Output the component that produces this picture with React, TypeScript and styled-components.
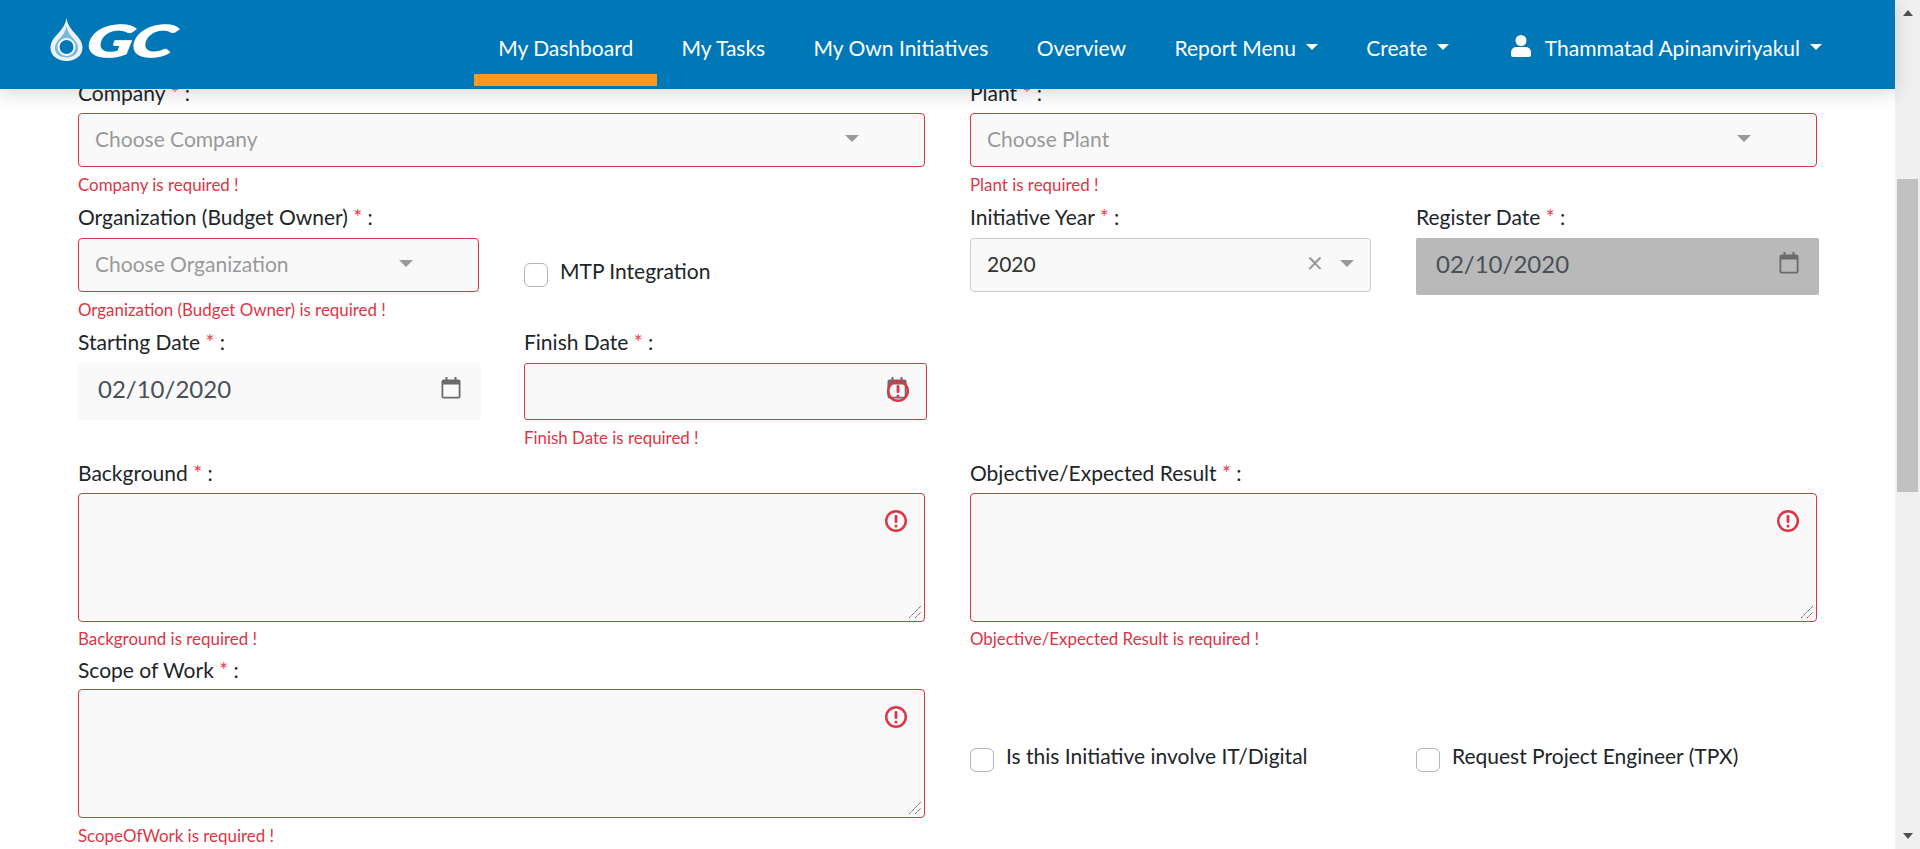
import React from "react";
import styled, { createGlobalStyle } from "styled-components";

const Global = createGlobalStyle`
  html, body { margin: 0; padding: 0; height: 100%; overflow: hidden; background: #fff; }
  body { font-family: Lato, "Open Sans", sans-serif; color: #212529; }
  * { box-sizing: border-box; }
`;

const Shell = styled.div`
  display: flex;
  width: 1920px;
  height: 849px;
  overflow: hidden;
`;
const Main = styled.div`
  flex: 1;
  min-width: 0;
  display: flex;
  flex-direction: column;
`;
const Header = styled.header`
  position: relative;
  z-index: 2;
  flex: none;
  height: 89px;
  background: #0077b7;
  box-shadow: 0 4px 18px rgba(0, 0, 0, 0.16);
  display: flex;
  align-items: stretch;
  color: #fff;
`;
const Logo = styled.div`
  width: 474px;
  flex: none;
  padding: 18px 0 0 50px;
  display: flex;
  align-items: flex-start;
  gap: 5px;
`;
const LogoText = styled.span`
  display: block;
  margin-top: 0;
  font: italic 900 44px/44px Lato, sans-serif;
  letter-spacing: -1px;
  color: #fff;
  -webkit-text-stroke: 1px #fff;
  transform: scaleX(1.55) skewX(-8deg);
  transform-origin: left center;
`;
const Nav = styled.nav`
  display: flex;
  align-items: stretch;
`;
const NavItem = styled.a<{ $active?: boolean; $left?: number }>`
  display: flex;
  align-items: center;
  height: 86px;
  padding: 21px 24.2px 0;
  margin-left: ${(p) => p.$left ?? 0}px;
  font-size: 21px;
  color: #fff;
  white-space: nowrap;
  border-bottom: 12px solid ${(p) => (p.$active ? "#ff981f" : "transparent")};
`;
const NavCaret = styled.i`
  display: block;
  margin-left: 10px;
  margin-top: -2px;
  width: 0;
  height: 0;
  border-left: 6.5px solid transparent;
  border-right: 6.5px solid transparent;
  border-top: 6.5px solid #fff;
`;
const UserIcon = styled.svg`
  width: 20px;
  height: 22px;
  margin-right: 14px;
  margin-top: -3px;
  fill: #fff;
`;

const Scroller = styled.div`
  position: relative;
  z-index: 1;
  flex: 1;
  overflow: hidden;
`;
const Form = styled.form`
  margin-top: -8px;
  padding-left: 78px;
  width: 1817px;
`;
const Row = styled.div<{ $top?: number }>`
  display: grid;
  grid-template-columns: repeat(4, minmax(0, 1fr));
  column-gap: 45px;
  margin-top: ${(p) => p.$top ?? 0}px;
`;
const Cell = styled.div<{ $span?: number; $pad?: number }>`
  grid-column: span ${(p) => p.$span ?? 1};
  padding-top: ${(p) => p.$pad ?? 0}px;
  min-width: 0;
`;
const Label = styled.label<{ $gap?: number }>`
  display: block;
  font-size: 21px;
  line-height: 24px;
  margin-bottom: ${(p) => p.$gap ?? 9}px;
  color: #212529;
`;
const Star = styled.span`
  color: #e8404f;
`;
const SelectBox = styled.div<{ $invalid?: boolean }>`
  height: 54px;
  display: flex;
  align-items: center;
  padding: 0 16px 4px;
  background: #f9f9f9;
  border: 1px solid ${(p) => (p.$invalid ? "#dc3545" : "#ccc")};
  border-radius: 4px;
  font-size: 21px;
`;
const Placeholder = styled.span<{ $filled?: boolean }>`
  flex: 1;
  color: ${(p) => (p.$filled ? "#333" : "#999")};
`;
const Caret = styled.i<{ $right?: number }>`
  display: block;
  flex: none;
  margin-right: ${(p) => p.$right ?? 49}px;
  margin-top: 0;
  width: 0;
  height: 0;
  border-left: 7.5px solid transparent;
  border-right: 7.5px solid transparent;
  border-top: 7.5px solid #999;
`;
const Clear = styled.span`
  flex: none;
  font-size: 28px;
  line-height: 1;
  color: #999;
  margin-top: -3px;
  margin-right: 17px;
`;
const DateBox = styled.div<{ $invalid?: boolean; $disabled?: boolean }>`
  position: relative;
  width: calc(100% + 2px);
  height: 57px;
  margin-top: ${(p) => (p.$disabled ? 1 : 0)}px;
  display: flex;
  align-items: center;
  justify-content: space-between;
  padding: 0 19px 6px;
  background: ${(p) => (p.$disabled ? "#b9b9b9" : "#f9f9f9")};
  border: 1px solid ${(p) => (p.$invalid ? "#dc3545" : "transparent")};
  border-radius: ${(p) => (p.$disabled ? 2 : 3)}px;
  font-size: 24px;
  color: #495057;
`;
const Cal = styled.svg`
  width: 20px;
  height: 22px;
  margin-top: -2px;
  margin-left: auto;
  flex: none;
  fill: #6b6b6b;
`;
const AlertSvg = styled.svg`
  position: absolute;
  width: 24px;
  height: 24px;
  right: 16px;
  top: 15px;
`;
const ErrorText = styled.div<{ $gap?: number }>`
  font-size: 16.9px;
  line-height: 20px;
  margin-top: ${(p) => p.$gap ?? 8}px;
  color: #dc3545;
`;
const AreaBox = styled.div`
  position: relative;
  height: 129px;
  background: #f9f9f9;
  border: 1px solid #dc3545;
  border-radius: 4px;
`;
const Grip = styled.svg`
  position: absolute;
  right: 2px;
  bottom: 2px;
  width: 14px;
  height: 14px;
`;
const Check = styled.label<{ $top?: number }>`
  display: flex;
  align-items: flex-start;
  gap: 12px;
  font-size: 21px;
  line-height: 24px;
  color: #212529;
  white-space: nowrap;
  padding-top: ${(p) => p.$top ?? 0}px;
`;
const Box = styled.span`
  flex: none;
  width: 24px;
  height: 24px;
  margin-top: 4px;
  background: #fff;
  border: 1px solid #adb5bd;
  border-radius: 6px;
`;

const Track = styled.aside`
  flex: none;
  width: 25px;
  height: 849px;
  background: #f0f0f0;
  padding: 10px 2px 0;
  display: flex;
  flex-direction: column;
  align-items: center;
`;
const ArrowUp = styled.i`
  width: 0;
  height: 0;
  border-left: 5.5px solid transparent;
  border-right: 5.5px solid transparent;
  border-bottom: 6px solid #505050;
`;
const ArrowDown = styled.i`
  width: 0;
  height: 0;
  margin-top: auto;
  margin-bottom: 10px;
  border-left: 5.5px solid transparent;
  border-right: 5.5px solid transparent;
  border-top: 6px solid #505050;
`;
const Thumb = styled.div`
  width: 21px;
  height: 313px;
  margin-top: 163px;
  background: #c1c1c1;
`;

const Req = ({ text }: { text: string }) => (
  <>
    {text} <Star>*</Star> :
  </>
);

const Calendar = () => (
  <Cal viewBox="0 0 20 22">
    <path d="M4.500 0h2v3h-2zM13.500 0h2v3h-2z" />
    <path
      fillRule="evenodd"
      d="M2.500 2.500h15a2 2 0 0 1 2 2v15a2 2 0 0 1-2 2h-15a2 2 0 0 1-2-2v-15a2 2 0 0 1 2-2zm-.2 5v12.200h15.400V7.500z"
    />
  </Cal>
);

const AlertGlyph = () => (
  <>
    <circle cx="12" cy="12" r="9.800" fill="none" stroke="#dc3545" strokeWidth="2.500" />
    <rect x="10.600" y="6" width="2.800" height="8" rx="1.200" fill="#dc3545" />
    <circle cx="12" cy="17" r="1.500" fill="#dc3545" />
  </>
);

const Resize = () => (
  <Grip viewBox="0 0 14 14">
    <path d="M1 13 13 1M7 13 13 7" stroke="#555" strokeWidth="1" strokeDasharray="1.400 .6" fill="none" />
  </Grip>
);

const Area = () => (
  <AreaBox>
    <AlertSvg viewBox="0 0 24 24">
      <AlertGlyph />
    </AlertSvg>
    <Resize />
  </AreaBox>
);

export default function App() {
  return (
    <Shell>
      <Global />
      <Main>
        <Header>
          <Logo>
            <svg width="33" height="43" viewBox="0 0 33 43" aria-hidden="true">
              <path
                d="M16.500 0c1 6 3 9 8 15 5 5.500 8 9 8 15 0 7.500-7 13-16 13S.5 37.500.5 30c0-6 3-9.500 8-15 5-6 7-9 8-15z"
                fill="#fff"
                fillOpacity=".92"
              />
              <path
                d="M16.500 8c1 5 3 8 5.500 11 4 4.500 6 7 6 11 0 6-5 9.500-11.500 9.500S5 36 5 30c0-4 2-6.500 6-11 2.500-3 4.500-6 5.500-11z"
                fill="#7db9dc"
              />
              <circle cx="16.500" cy="29" r="8" fill="#0077b7" stroke="#fff" strokeWidth="2" />
            </svg>
            <LogoText>GC</LogoText>
          </Logo>
          <Nav>
            <NavItem $active>My Dashboard</NavItem>
            <NavItem>My Tasks</NavItem>
            <NavItem>My Own Initiatives</NavItem>
            <NavItem>Overview</NavItem>
            <NavItem>
              Report Menu
              <NavCaret />
            </NavItem>
            <NavItem>
              Create
              <NavCaret />
            </NavItem>
            <NavItem $left={13}>
              <UserIcon viewBox="0 0 20 22">
                <ellipse cx="10" cy="5.500" rx="5.500" ry="5.500" />
                <path d="M0 20v-2.500C0 14 2.500 12 6 12h8c3.500 0 6 2 6 5.500V20a2 2 0 0 1-2 2H2a2 2 0 0 1-2-2z" />
              </UserIcon>
              Thammatad Apinanviriyakul
              <NavCaret />
            </NavItem>
          </Nav>
        </Header>
        <Scroller>
          <Form>
            <Row>
              <Cell $span={2}>
                <Label $gap={8}>
                  <Req text="Company" />
                </Label>
                <SelectBox $invalid>
                  <Placeholder>Choose Company</Placeholder>
                  <Caret />
                </SelectBox>
                <ErrorText>Company is required !</ErrorText>
              </Cell>
              <Cell $span={2}>
                <Label $gap={8}>
                  <Req text="Plant" />
                </Label>
                <SelectBox $invalid>
                  <Placeholder>Choose Plant</Placeholder>
                  <Caret />
                </SelectBox>
                <ErrorText>Plant is required !</ErrorText>
              </Cell>
            </Row>
            <Row $top={10}>
              <Cell>
                <Label>
                  <Req text="Organization (Budget Owner)" />
                </Label>
                <SelectBox $invalid>
                  <Placeholder>Choose Organization</Placeholder>
                  <Caret />
                </SelectBox>
                <ErrorText>Organization (Budget Owner) is required !</ErrorText>
              </Cell>
              <Cell $pad={54}>
                <Check>
                  <Box />
                  MTP Integration
                </Check>
              </Cell>
              <Cell>
                <Label>
                  <Req text="Initiative Year" />
                </Label>
                <SelectBox>
                  <Placeholder $filled>2020</Placeholder>
                  <Clear>×</Clear>
                  <Caret $right={0} />
                </SelectBox>
              </Cell>
              <Cell>
                <Label>
                  <Req text="Register Date" />
                </Label>
                <DateBox $disabled>
                  02/10/2020
                  <Calendar />
                </DateBox>
              </Cell>
            </Row>
            <Row $top={10}>
              <Cell>
                <Label>
                  <Req text="Starting Date" />
                </Label>
                <DateBox>
                  02/10/2020
                  <Calendar />
                </DateBox>
              </Cell>
              <Cell>
                <Label>
                  <Req text="Finish Date" />
                </Label>
                <DateBox $invalid>
                  <Calendar />
                  <AlertSvg viewBox="0 0 24 24">
                    <AlertGlyph />
                  </AlertSvg>
                </DateBox>
                <ErrorText>Finish Date is required !</ErrorText>
              </Cell>
            </Row>
            <Row $top={13}>
              <Cell $span={2}>
                <Label $gap={8}>
                  <Req text="Background" />
                </Label>
                <Area />
                <ErrorText $gap={7}>Background is required !</ErrorText>
              </Cell>
              <Cell $span={2}>
                <Label $gap={8}>
                  <Req text="Objective/Expected Result" />
                </Label>
                <Area />
                <ErrorText $gap={7}>Objective/Expected Result is required !</ErrorText>
              </Cell>
            </Row>
            <Row $top={9}>
              <Cell $span={2}>
                <Label $gap={7}>
                  <Req text="Scope of Work" />
                </Label>
                <Area />
                <ErrorText>ScopeOfWork is required !</ErrorText>
              </Cell>
              <Cell $pad={86}>
                <Check>
                  <Box />
                  Is this Initiative involve IT/Digital
                </Check>
              </Cell>
              <Cell $pad={86}>
                <Check>
                  <Box />
                  Request Project Engineer (TPX)
                </Check>
              </Cell>
            </Row>
          </Form>
        </Scroller>
      </Main>
      <Track>
        <ArrowUp />
        <Thumb />
        <ArrowDown />
      </Track>
    </Shell>
  );
}
